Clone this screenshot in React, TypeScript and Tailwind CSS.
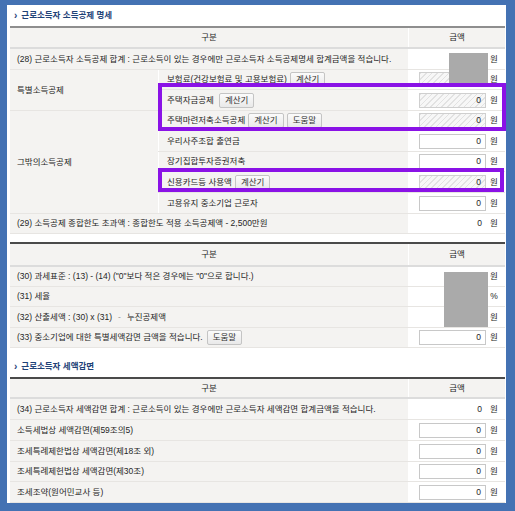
import React from 'react';

const cellBg = 'bg-[#f4f3f1]';
const rowLine = 'border-b border-[#e7e5e2]';

function Btn({ children }: { children: React.ReactNode }) {
  return (
    <span className="h-[15px] px-[5px] flex items-center border border-[#c4c4c4] rounded-[2px] bg-[linear-gradient(#fbfbfb,#e9e9e9)] text-[#333]">
      {children}
    </span>
  );
}

type Kind = 'input' | 'hatch' | 'plain' | 'none';

function Amount({ kind, unit = '원' }: { kind: Kind; unit?: string }) {
  let box = 'w-[67px] h-[15px] flex items-center justify-end pr-[4px]';
  if (kind === 'input') box += ' border border-[#c8c8c8] bg-white';
  if (kind === 'hatch')
    box +=
      ' border border-[#cfcfcf] bg-[image:repeating-linear-gradient(135deg,#e2e2e2_0px,#e2e2e2_1px,#f7f7f7_1px,#f7f7f7_4px)]';
  return (
    <div className="w-[97px] bg-white flex items-center justify-end pr-[7px] gap-[4px]">
      <div className={box}>{kind === 'none' ? '' : '0'}</div>
      <span className="w-[8px] text-center">{unit}</span>
    </div>
  );
}

function Row({ h, children, amount }: { h: string; children: React.ReactNode; amount: React.ReactNode }) {
  return (
    <div className={`flex ${h} ${rowLine}`}>
      <div className={`flex-1 ${cellBg} flex items-center pl-[7px] gap-[4px]`}>{children}</div>
      {amount}
    </div>
  );
}

function SubRow({ h, children, amount }: { h: string; children: React.ReactNode; amount: React.ReactNode }) {
  return (
    <div className={`flex ${h} ${rowLine}`}>
      <div className={`flex-1 ${cellBg} border-l border-white flex items-center pl-[8px] gap-[3px]`}>{children}</div>
      {amount}
    </div>
  );
}

function Header({ h }: { h: string }) {
  return (
    <div className={`flex ${h} ${cellBg} border-b-2 border-[#dcdcdc]`}>
      <div className="flex-1 flex items-center justify-center">구분</div>
      <div className="w-[97px] border-l border-white flex items-center justify-center">금액</div>
    </div>
  );
}

function Title({ h, children }: { h: string; children: React.ReactNode }) {
  return (
    <div className={`${h} flex items-center pl-[7px] gap-[4px] text-[#1f4378] font-bold`}>
      <span className="text-[10px] leading-none">›</span>
      <span>{children}</span>
    </div>
  );
}

export default function App() {
  return (
    <div className="w-[515px] h-[511px] bg-[#4472b3] pt-[5px] pl-[7px] font-['Liberation_Sans','Noto_Sans_CJK_KR',sans-serif] text-[8.5px] leading-none text-[#262626]">
      <div className="relative w-[499px] h-[498px] bg-white overflow-hidden">
        <Title h="h-[21px]">근로소득자 소득공제 명세</Title>
        <div className="ml-[3px] w-[495px]">
          <div className="h-[2px] bg-[#8e8e8e]" />
          <Header h="h-[21px]" />
          <Row h="h-[21px]" amount={<Amount kind="none" />}>
            (28) 근로소득자 소득공제 합계 : 근로소득이 있는 경우에만 근로소득자 소득공제명세 합계금액을 적습니다.
          </Row>
          <div className="flex">
            <div className="w-[148px] flex flex-col">
              <div className={`h-[41px] ${cellBg} ${rowLine} flex items-center pl-[7px]`}>특별소득공제</div>
              <div className={`h-[103px] ${cellBg} ${rowLine} flex items-center pl-[7px]`}>그밖의소득공제</div>
            </div>
            <div className="flex-1">
              <SubRow h="h-[20px]" amount={<Amount kind="hatch" />}>
                <span>보험료(건강보험료 및 고용보험료)</span>
                <Btn>계산기</Btn>
              </SubRow>
              <SubRow h="h-[21px]" amount={<Amount kind="hatch" />}>
                <span className="mr-[2px]">주택자금공제</span>
                <Btn>계산기</Btn>
              </SubRow>
              <SubRow h="h-[20px]" amount={<Amount kind="hatch" />}>
                <span>주택마련저축소득공제</span>
                <Btn>계산기</Btn>
                <Btn>도움말</Btn>
              </SubRow>
              <SubRow h="h-[21px]" amount={<Amount kind="input" />}>
                <span>우리사주조합 출연금</span>
              </SubRow>
              <SubRow h="h-[20px]" amount={<Amount kind="input" />}>
                <span>장기집합투자증권저축</span>
              </SubRow>
              <SubRow h="h-[21px]" amount={<Amount kind="hatch" />}>
                <span>신용카드등 사용액</span>
                <Btn>계산기</Btn>
              </SubRow>
              <SubRow h="h-[21px]" amount={<Amount kind="input" />}>
                <span>고용유지 중소기업 근로자</span>
              </SubRow>
            </div>
          </div>
          <Row h="h-[20px]" amount={<Amount kind="plain" />}>
            (29) 소득공제 종합한도 초과액 : 종합한도 적용 소득공제액 - 2,500만원
          </Row>

          <div className="h-[8px]" />
          <div className="h-[2px] bg-[#4a4a4a]" />
          <Header h="h-[23px]" />
          <Row h="h-[20px]" amount={<Amount kind="none" />}>
            (30) 과세표준 : (13) - (14) ("0"보다 적은 경우에는 "0"으로 합니다.)
          </Row>
          <Row h="h-[20px]" amount={<Amount kind="none" unit="%" />}>
            (31) 세율
          </Row>
          <Row h="h-[21px]" amount={<Amount kind="none" />}>
            (32) 산출세액 : (30) x (31) <span className="text-[#9a9a9a] mx-[2px]">-</span> 누진공제액
          </Row>
          <Row h="h-[20px]" amount={<Amount kind="input" />}>
            <span>(33) 중소기업에 대한 특별세액감면 금액을 적습니다.</span>
            <Btn>도움말</Btn>
          </Row>
        </div>

        <Title h="h-[29px] pt-[8px]">근로소득자 세액감면</Title>
        <div className="ml-[3px] w-[495px]">
          <div className="h-[2px] bg-[#4a4a4a]" />
          <Header h="h-[20px]" />
          <Row h="h-[21px]" amount={<Amount kind="plain" />}>
            (34) 근로소득자 세액감면 합계 : 근로소득이 있는 경우에만 근로소득자 세액감면 합계금액을 적습니다.
          </Row>
          <Row h="h-[21px]" amount={<Amount kind="input" />}>
            소득세법상 세액감면(제59조의5)
          </Row>
          <Row h="h-[21px]" amount={<Amount kind="input" />}>
            조세특례제한법상 세액감면(제18조 외)
          </Row>
          <Row h="h-[20px]" amount={<Amount kind="input" />}>
            조세특례제헌법상 세액감면(제30조)
          </Row>
          <Row h="h-[21px]" amount={<Amount kind="input" />}>
            조세조약(원어민교사 등)
          </Row>
        </div>

        {/* redaction blocks */}
        <div className="absolute left-[442px] top-[48px] w-[39px] h-[30px] bg-[#aaaaaa]" />
        <div className="absolute left-[437px] top-[267px] w-[44px] h-[55px] bg-[#aaaaaa]" />

        {/* highlight boxes */}
        <div className="absolute left-[151px] top-[78px] w-[348px] h-[48px] border-[4px] border-[#8a12e6]" />
        <div className="absolute left-[151px] top-[163px] w-[346px] h-[24px] border-[4px] border-[#8a12e6]" />
      </div>
    </div>
  );
}
